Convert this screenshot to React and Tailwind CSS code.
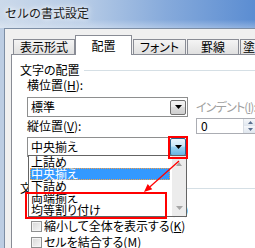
import React from 'react';

const Arrow = ({ color = '#000' }) => (
  <svg width="7" height="4" viewBox="0 0 7 4">
    <polygon points="0,0 7,0 3.5,4" fill={color} />
  </svg>
);

const Tab = ({ children, width, active, className = '' }) => {
  if (active) {
    return (
      <div
        className={`relative z-10 -mb-px shrink-0 h-[20px] flex items-center justify-center whitespace-nowrap bg-white border border-b-0 border-[#898c95] ${width} ${className}`}
      >
        {children}
      </div>
    );
  }
  return (
    <div
      className={`shrink-0 h-[15px] flex items-center justify-center whitespace-nowrap overflow-hidden border border-b-0 border-[#898c95] bg-gradient-to-b from-[#f4f4f4] to-[#e0e0e0] ${width} ${className}`}
    >
      {children}
    </div>
  );
};

const CheckRow = ({ children, className = '' }) => (
  <div className={`h-[16px] flex items-center pl-[19px] whitespace-nowrap ${className}`}>
    <div className="shrink-0 w-[11px] h-[11px] border border-[#8e8f8f] bg-gradient-to-br from-[#d6d6d6] to-[#f7f7f7] shadow-[inset_0_0_0_1px_#f4f4f4]" />
    <span className="ml-[2px]">{children}</span>
  </div>
);

export default function App() {
  return (
    <div className="relative w-[255px] h-[248px] overflow-hidden bg-[#bccde3] font-['Noto_Sans_CJK_JP',sans-serif] [font-feature-settings:'palt'] text-[12px] leading-[14px] text-black">
      {/* Title bar */}
      <div className="h-[28px] flex items-center pl-[5px] pb-[2px] bg-[linear-gradient(180deg,rgba(255,255,255,0)_70%,rgba(255,255,255,0.3)_100%),linear-gradient(90deg,#cbd9ea_0%,#b3c9e5_35%,#86aadb_65%,#5b8dd2_100%)]">
        <span className="text-[#1a1a1a] [font-feature-settings:normal] [text-shadow:0_0_4px_#fff,0_0_8px_#fff]">セルの書式設定</span>
      </div>

      {/* Client area */}
      <div className="ml-[4px] h-[220px] border-l border-t border-[#7d8ea5] bg-[#f0f0f0] pl-[6px] pt-[6px]">
        {/* Tabs */}
        <div className="flex items-end h-[19px] pl-[2px]">
          <Tab width="w-[62px]">表示形式</Tab>
          <Tab width="w-[57px]" active>配置</Tab>
          <Tab width="w-[53px]" className="ml-[1px]">フォント</Tab>
          <Tab width="w-[52px]" className="ml-[1px]">罫線</Tab>
          <Tab width="w-[70px]" className="ml-[1px] !justify-start pl-[2px]">塗りつぶし</Tab>
        </div>

        {/* Panel */}
        <div className="w-[250px] h-[200px] border-l border-t border-[#898c95] bg-white pt-[7px]">
          {/* 文字の配置 */}
          <div className="flex items-center h-[16px] pl-[8px]">
            <span>文字の配置</span>
            <div className="flex-1 h-px bg-[#d5dfe5] ml-[4px]" />
          </div>

          <div className="flex pl-[15px]">
            <div className="w-[161px] shrink-0">
              <div className="h-[14px]">横位置(<span className="underline">H</span>):</div>
              <div className="mt-[5px] h-[20px] border border-[#8e8f8f] bg-white flex items-center">
                <span className="flex-1 pl-[3px]">標準</span>
                <div className="w-[16px] h-[15px] mr-[1px] flex items-center justify-center border border-[#707070] rounded-[2px] bg-[linear-gradient(180deg,#f3f3f3_0%,#ebebeb_45%,#dcdcdc_50%,#cfcfcf_100%)]">
                  <Arrow />
                </div>
              </div>

              <div className="mt-[2px] h-[14px]">縦位置(<span className="underline">V</span>):</div>
              <div className="relative mt-[4px]">
                <div className="h-[20px] border border-[#8e8f8f] bg-white flex items-stretch">
                  <span className="flex-1 pl-[3px] flex items-center">中央揃え</span>
                  <div className="w-[16px] mr-[1px] flex items-center justify-center border border-[#2c628b] rounded-[2px] bg-[linear-gradient(180deg,#eaf6fd_0%,#c9e8f9_45%,#9ad4f3_50%,#66b5e3_100%)]">
                    <Arrow />
                  </div>
                </div>

                {/* Dropdown list */}
                <div className="absolute left-[1px] top-[18px] z-20 w-[159px] h-[62px] border border-[#646464] bg-white flex">
                  <div className="w-[142px] px-[1px] leading-[12px]">
                    <div className="h-[12px] pl-[1px]">上詰め</div>
                    <div className="h-[12px] bg-[#3399ff] text-white border border-dotted border-[#f5a046] leading-[10px]">中央揃え</div>
                    <div className="h-[12px] pl-[1px]">下詰め</div>
                    <div className="h-[12px] pl-[1px]">両端揃え</div>
                    <div className="h-[12px] pl-[1px]">均等割り付け</div>
                  </div>
                  <div className="ml-[1px] w-[14px] bg-[#ececec] flex flex-col justify-between">
                    <div className="h-[16px] flex items-center justify-center">
                      <svg width="6" height="4" viewBox="0 0 6 4"><polygon points="3,0 6,4 0,4" fill="#a6a6a6" /></svg>
                    </div>
                    <div className="h-[16px] flex items-center justify-center">
                      <Arrow color="#a6a6a6" />
                    </div>
                  </div>
                </div>
              </div>
            </div>

            <div className="ml-[8px] pt-[22px] shrink-0">
              <div className="h-[14px] whitespace-nowrap tracking-[-0.8px] text-[#a0a0a0]">インデント(<span className="underline">I</span>):</div>
              <div className="mt-[4px] w-[64px] h-[16px] border border-[#abadb3] bg-white flex">
                <span className="w-[46px] pl-[4px] leading-[14px]">0</span>
                <div className="w-[13px] flex flex-col border-l border-[#d8dde3]">
                  <div className="flex-1 flex items-center justify-center bg-gradient-to-b from-[#f5f7fa] to-[#dfe6ee]">
                    <svg width="5" height="3" viewBox="0 0 5 3"><polygon points="2.5,0 5,3 0,3" fill="#5b6f8f" /></svg>
                  </div>
                  <div className="flex-1 flex items-center justify-center bg-gradient-to-b from-[#f5f7fa] to-[#dfe6ee]">
                    <svg width="5" height="3" viewBox="0 0 5 3"><polygon points="0,0 5,0 2.5,3" fill="#5b6f8f" /></svg>
                  </div>
                </div>
              </div>
            </div>
          </div>

          {/* 文字の制御 */}
          <div className="mt-[23px] flex items-center h-[16px] pl-[8px]">
            <span>文字の制御</span>
            <div className="flex-1 h-px bg-[#d5dfe5] ml-[4px]" />
          </div>
          <div className="mt-[6px]">
            <CheckRow className="tracking-[-0.7px]">折り返して全体を表示する(<span className="underline">W</span>)</CheckRow>
            <CheckRow>縮小して全体を表示する(<span className="underline">K</span>)</CheckRow>
            <CheckRow>セルを結合する(<span className="underline">M</span>)</CheckRow>
          </div>
        </div>
      </div>

      {/* Annotations */}
      <div className="absolute z-30 left-[168px] top-[136px] w-[20px] h-[23px] border-2 border-[#ff0000]" />
      <div className="absolute z-30 left-[25px] top-[192px] w-[142px] h-[27px] border-2 border-[#ff0000]" />
      <svg className="absolute z-30 left-0 top-0" width="255" height="248" viewBox="0 0 255 248">
        <line x1="179" y1="161" x2="150" y2="186.7" stroke="#ff0000" strokeWidth="1.3" />
        <polygon points="144,192 152.3,189.3 147.7,184.1" fill="#ff0000" />
      </svg>
    </div>
  );
}
